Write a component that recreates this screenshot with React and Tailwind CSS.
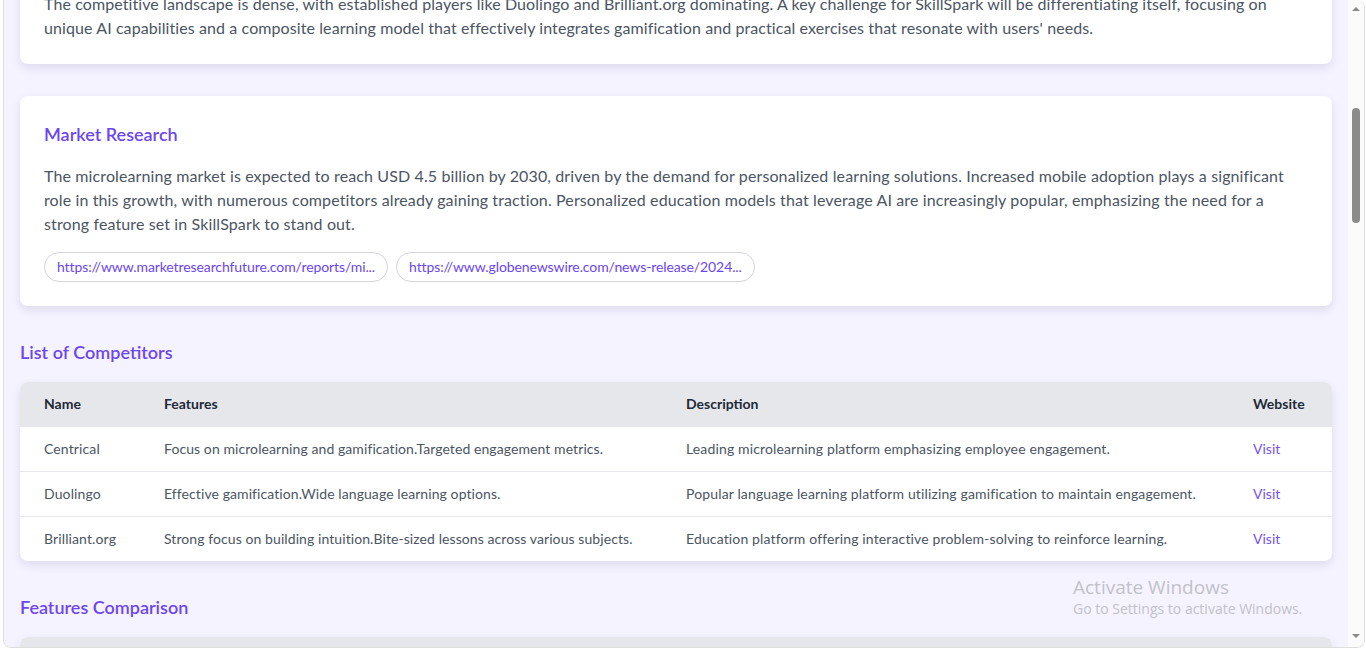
import React from 'react'

const competitors = [
  {
    name: 'Centrical',
    features: 'Focus on microlearning and gamification.Targeted engagement metrics.',
    description: 'Leading microlearning platform emphasizing employee engagement.',
  },
  {
    name: 'Duolingo',
    features: 'Effective gamification.Wide language learning options.',
    description: 'Popular language learning platform utilizing gamification to maintain engagement.',
  },
  {
    name: 'Brilliant.org',
    features: 'Strong focus on building intuition.Bite-sized lessons across various subjects.',
    description: 'Education platform offering interactive problem-solving to reinforce learning.',
  },
]

const sources = [
  'https://www.marketresearchfuture.com/reports/mi...',
  'https://www.globenewswire.com/news-release/2024...',
]

function Scrollbar() {
  return (
    <div className="flex w-[16px] flex-col items-center bg-[#fbfbfb]">
      <div className="mt-[7px] h-0 w-0 border-x-[4px] border-b-[4px] border-x-transparent border-b-[#8a8a8a]" />
      <div className="mt-[97px] h-[115px] w-[8px] rounded-full bg-[#8b8b8b]" />
      <div className="flex-1" />
      <div className="mb-[9px] h-0 w-0 border-x-[4px] border-t-[4px] border-x-transparent border-t-[#8a8a8a]" />
    </div>
  )
}

export default function App() {
  return (
    <div className="relative h-[650px] w-full bg-white pl-[3px] pr-[1px] pb-[2px] font-['Lato','Liberation_Sans',sans-serif]">
      <div className="flex h-full overflow-hidden rounded-b-lg rounded-tr-lg border border-t-0 border-[#dedede]">
        <div className="flex-1 overflow-hidden bg-[#f5f3ff]">
          <div className="mt-[-32px] flex flex-col px-4">
            <section className="rounded-lg bg-white p-6 shadow-[0_4px_10px_rgba(60,50,120,0.12)]">
              <p className="text-base leading-6 tracking-[0.09px] text-[#4b5563]">
                The competitive landscape is dense, with established players like Duolingo and Brilliant.org dominating. A
                key challenge for SkillSpark will be differentiating itself, focusing on unique AI capabilities and a
                composite learning model that effectively integrates gamification and practical exercises that resonate
                with users' needs.
              </p>
            </section>

            <section className="mt-8 rounded-lg bg-white p-6 shadow-[0_4px_10px_rgba(60,50,120,0.12)]">
              <h2 className="text-lg font-semibold leading-7 text-[#6b46f0]">Market Research</h2>
              <p className="mt-4 text-base leading-6 tracking-[0.12px] text-[#4b5563]">
                The microlearning market is expected to reach USD 4.5 billion by 2030, driven by the demand for
                personalized learning solutions. Increased mobile adoption plays a significant role in this growth, with
                numerous competitors already gaining traction. Personalized education models that leverage AI are
                increasingly popular, emphasizing the need for a strong feature set in SkillSpark to stand out.
              </p>
              <div className="mt-4 flex gap-2">
                {sources.map((s) => (
                  <a
                    key={s}
                    className="rounded-full border border-[#d4d4dc] px-3 py-1 text-sm leading-5 tracking-[-0.1px] text-[#6b46f0]"
                  >
                    {s}
                  </a>
                ))}
              </div>
            </section>

            <h2 className="mt-8 mb-4 text-lg font-semibold leading-7 text-[#6b46f0]">List of Competitors</h2>
            <div className="overflow-hidden rounded-lg bg-white shadow-[0_4px_10px_rgba(60,50,120,0.12)]">
              <table className="w-full table-fixed text-left text-sm">
                <colgroup>
                  <col className="w-[120px]" />
                  <col className="w-[522px]" />
                  <col className="w-[567px]" />
                  <col />
                </colgroup>
                <thead className="bg-[#e5e7eb]">
                  <tr>
                    <th className="px-6 py-3 font-bold leading-5 text-[#1f2937]">Name</th>
                    <th className="px-6 py-3 font-bold leading-5 text-[#1f2937]">Features</th>
                    <th className="px-6 py-3 font-bold leading-5 text-[#1f2937]">Description</th>
                    <th className="px-6 py-3 font-bold leading-5 text-[#1f2937]">Website</th>
                  </tr>
                </thead>
                <tbody>
                  {competitors.map((c) => (
                    <tr key={c.name} className="border-t border-[#e5e7eb]">
                      <td className="whitespace-nowrap px-6 py-3 leading-5 tracking-[0.12px] text-[#4b5563]">{c.name}</td>
                      <td className="whitespace-nowrap px-6 py-3 leading-5 tracking-[0.08px] text-[#4b5563]">{c.features}</td>
                      <td className="whitespace-nowrap px-6 py-3 leading-5 tracking-[0.14px] text-[#4b5563]">{c.description}</td>
                      <td className="px-6 py-3 leading-5">
                        <a className="text-[#7452f2]">Visit</a>
                      </td>
                    </tr>
                  ))}
                </tbody>
              </table>
            </div>

            <h2 className="mt-8 mb-4 text-lg font-semibold leading-7 text-[#6b46f0]">Features Comparison</h2>
            <div className="overflow-hidden rounded-lg bg-white shadow-[0_4px_10px_rgba(60,50,120,0.12)]">
              <div className="h-[45px] bg-[#e5e7eb]" />
            </div>
          </div>
        </div>
        <Scrollbar />
      </div>

      <div className="pointer-events-none absolute left-[1073px] top-[575px] font-['Open_Sans',sans-serif] text-[#c2c2c8]">
        <div className="text-[19px] leading-6">Activate Windows</div>
        <div className="text-[14px] leading-5">Go to Settings to activate Windows.</div>
      </div>
    </div>
  )
}
